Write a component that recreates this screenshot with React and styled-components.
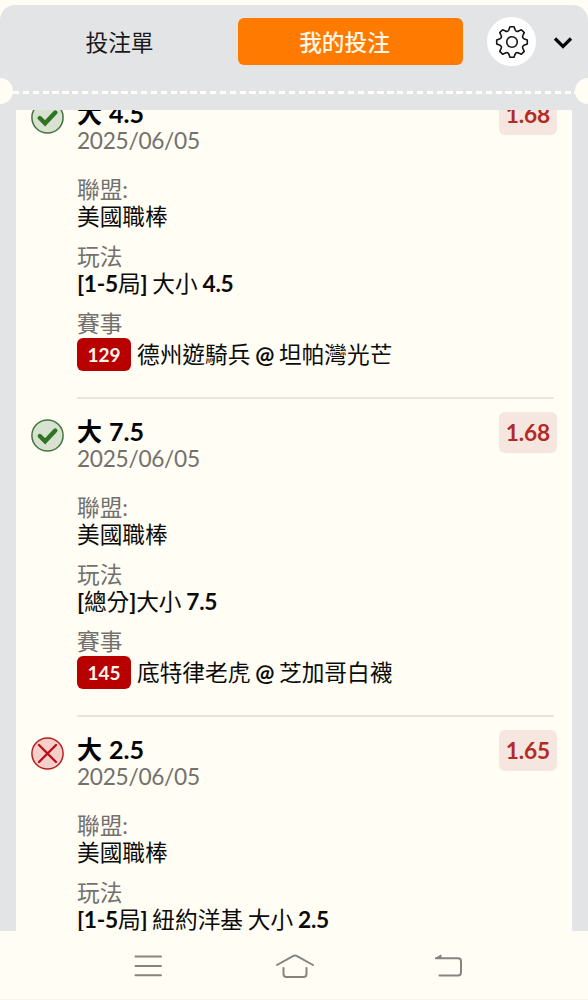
import React from 'react';
import styled, { createGlobalStyle } from 'styled-components';

const GlobalStyle = createGlobalStyle`
  * {
    box-sizing: border-box;
  }
  body {
    margin: 0;
    background: #fffdf4;
    font-family: Lato, 'Noto Sans CJK TC', sans-serif;
    color: #0b0b0b;
  }
`;

const Screen = styled.div`
  height: 1000px;
  padding-top: 5px;
  display: flex;
  flex-direction: column;
  overflow: hidden;
`;

const Panel = styled.div`
  flex: 1;
  min-height: 0;
  display: flex;
  flex-direction: column;
  background: #e3e4e6;
  border-radius: 15px 15px 0 0;
`;

const Header = styled.div`
  height: 73px;
  flex: none;
  display: flex;
  align-items: center;
  padding-left: 2px;
`;

const Tab = styled.button`
  width: ${props => (props.$active ? '225px' : '236px')};
  height: 46.5px;
  padding: ${props => (props.$active ? '0 12px 0 0' : '0 1px 0 0')};
  border: none;
  border-radius: 6px;
  background: ${props => (props.$active ? '#ff7a00' : 'transparent')};
  color: ${props => (props.$active ? '#fff6e4' : '#1a1a1c')};
  font-family: inherit;
  font-size: 22.7px;
  font-weight: ${props => (props.$active ? 500 : 400)};
`;

const GearButton = styled.button`
  width: 49px;
  height: 49px;
  margin-left: 24px;
  padding: 0;
  border: none;
  border-radius: 50%;
  background: #fff;
  display: flex;
  align-items: center;
  justify-content: center;
`;

const Chevron = styled.svg`
  margin: 3px 0 0 16px;
`;

const TicketEdge = styled.div`
  height: 26px;
  flex: none;
  display: flex;
  align-items: center;
  justify-content: space-between;
  margin: 0 -13px;
`;

const Notch = styled.span`
  width: 26px;
  height: 26px;
  border-radius: 50%;
  background: #fffdf4;
`;

const Dashes = styled.span`
  flex: 1;
  height: 3px;
  margin-top: 3px;
  background: repeating-linear-gradient(90deg, #fffef8 0 6.3px, transparent 6.3px 9.85px);
`;

const ListArea = styled.div`
  flex: 1;
  min-height: 0;
  margin: 6px 16px 0;
  background: #fffdf4;
  overflow: hidden;
`;

// the list is scrolled a little under the ticket edge
const BetList = styled.div`
  margin-top: -30px;
`;

const Bet = styled.div`
  height: 318px;
  display: flex;
  align-items: flex-start;
  padding: 14px 15px 0;
`;

const StatusIcon = styled.svg`
  flex: none;
  margin-top: 7px;
`;

const BetBody = styled.div`
  flex: 1;
  height: 305px;
  padding-top: 5px;
  margin: 0 -55px 0 13px;
  border-bottom: 2px solid #e8e6e1;
`;

const Title = styled.div`
  font-size: 25px;
  font-weight: 700;
  line-height: 28px;
  word-spacing: 1px;
  color: #000;
`;

const BetDate = styled.div`
  font-size: 22.7px;
  line-height: 27px;
  letter-spacing: -0.3px;
  color: #72716e;
  margin-bottom: 22px;
`;

const Field = styled.div`
  margin-bottom: 13px;
  font-size: 22.7px;
  line-height: 27px;
  white-space: pre;
  word-spacing: -1px;
`;

const Label = styled.div`
  color: #72716e;
`;

const Strong = styled.span`
  font-weight: 700;
  letter-spacing: -0.25px;
`;

const Match = styled.div`
  height: 33px;
  margin-top: 1px;
  display: flex;
  align-items: center;
`;

const GameNo = styled.span`
  width: 54px;
  height: 33px;
  margin-right: 6px;
  border-radius: 6px;
  background: #b80000;
  color: #fff6ec;
  font-size: 19px;
  font-weight: 700;
  line-height: 34px;
  text-align: center;
`;

const Odds = styled.div`
  position: relative;
  width: 58px;
  height: 41px;
  flex: none;
  border-radius: 6px;
  background: #f6e6e0;
  color: #b32b25;
  font-size: 22.7px;
  font-weight: 700;
  letter-spacing: -0.15px;
  line-height: 41px;
  text-align: center;
`;

const NavBar = styled.div`
  height: 69px;
  flex: none;
  display: flex;
  align-items: center;
  justify-content: center;
  padding: 2px 0 0 8px;
  border-bottom: 1px solid #fbf3ee;
`;

const NavIcon = styled.svg`
  fill: none;
  stroke: #858580;
  stroke-width: 2;
  stroke-linecap: round;
  stroke-linejoin: round;
  margin-right: ${props => props.$gap || 0}px;
`;

const bets = [
    { id: 1, won: true, total: '4.5', odds: '1.68', play: [['[1-5', true], ['局'], [']', true], [' 大小 '], ['4.5', true]], no: '129', away: '德州遊騎兵', home: '坦帕灣光芒' },
    { id: 2, won: true, total: '7.5', odds: '1.68', play: [['[', true], ['總分'], [']', true], ['大小 '], ['7.5', true]], no: '145', away: '底特律老虎', home: '芝加哥白襪' },
    { id: 3, won: false, total: '2.5', odds: '1.65', play: [['[1-5', true], ['局'], [']', true], [' 紐約洋基 大小 '], ['2.5', true]] },
];

const Status = ({ won }) => (
    <StatusIcon width="33" height="33" viewBox="0 0 33 33" fill="none">
        <circle cx="16.5" cy="16.5" r="15.6" fill={won ? '#d9e2d0' : '#f5cfca'} stroke={won ? '#427542' : '#b52020'} strokeWidth="1.5" />
        {won
            ? <path d="M8.8 17l5.3 5.3L24.3 11.6" stroke="#2f7423" strokeWidth="4.4" strokeLinecap="round" />
            : <path d="M8 8l17 17M25 8L8 25" stroke="#b8101a" strokeWidth="2.4" strokeLinecap="round" />}
    </StatusIcon>
);

// one tooth, turned eight times round the centre
const tooth = [[-3.1, -12.4], [-2, -15.3], [2, -15.3], [3.1, -12.4]];

const gearPath = [0, 1, 2, 3, 4, 5, 6, 7].map(i => {
    const a = (i * Math.PI) / 4;
    const [p0, p1, p2, p3] = tooth.map(([x, y]) => (
        `${(x * Math.cos(a) - y * Math.sin(a)).toFixed(2)} ${(x * Math.sin(a) + y * Math.cos(a)).toFixed(2)}`
    ));
    return `${i === 0 ? 'M' : 'A2.3 2.3 0 0 0 '}${p0}L${p1}L${p2}L${p3}`;
}).join('') + 'A2.3 2.3 0 0 0 -3.1 -12.4Z';

const Gear = () => (
    <svg width="34" height="34" viewBox="-17 -17 34 34" fill="none" stroke="#151515" strokeWidth="1.6" strokeLinejoin="round">
        <path d={gearPath} />
        <circle r="5.3" />
    </svg>
);

const App = () => {
    return (
        <Screen>
            <GlobalStyle />
            <Panel>
                <Header>
                    <Tab>投注單</Tab>
                    <Tab $active>我的投注</Tab>
                    <GearButton><Gear /></GearButton>
                    <Chevron width="22" height="14" viewBox="0 0 22 14" fill="none">
                        <path d="M3 2.5l8 8 8-8" stroke="#080808" strokeWidth="3.2" />
                    </Chevron>
                </Header>
                <TicketEdge>
                    <Notch />
                    <Dashes />
                    <Notch />
                </TicketEdge>
                <ListArea>
                    <BetList>
                        {bets.map(bet => (
                            <Bet key={bet.id}>
                                <Status won={bet.won} />
                                <BetBody>
                                    <Title>大 {bet.total}</Title>
                                    <BetDate>2025/06/05</BetDate>
                                    <Field>
                                        <Label>聯盟:</Label>
                                        美國職棒
                                    </Field>
                                    <Field>
                                        <Label>玩法</Label>
                                        {bet.play.map(([text, bold]) => (bold ? <Strong key={text}>{text}</Strong> : text))}
                                    </Field>
                                    {bet.no && (
                                        <Field>
                                            <Label>賽事</Label>
                                            <Match>
                                                <GameNo>{bet.no}</GameNo>
                                                <span>{bet.away} <Strong>@</Strong> {bet.home}</span>
                                            </Match>
                                        </Field>
                                    )}
                                </BetBody>
                                <Odds>{bet.odds}</Odds>
                            </Bet>
                        ))}
                    </BetList>
                </ListArea>
            </Panel>
            <NavBar>
                <NavIcon $gap={113} width="28" height="24" viewBox="0 0 28 24">
                    <path d="M1.5 2.5h25.5M1.5 12h25.5M1.5 21.3h25.5" />
                </NavIcon>
                <NavIcon $gap={119} width="40" height="26" viewBox="0 0 40 26">
                    <path d="M2 12L17.5 3.3q2.5-1.4 5 0L38 12M8.5 15v6q0 3 3 3h17q3 0 3-3v-6" />
                </NavIcon>
                <NavIcon width="28" height="24" viewBox="0 0 28 24">
                    <path d="M2 4.2h22q3 0 3 3v11.300q0 3-3 3H5.500" />
                    <path d="M1.500 4.200L7 1v3.200z" fill="#858580" strokeWidth="1" />
                </NavIcon>
            </NavBar>
        </Screen>
    );
};

export default App;
